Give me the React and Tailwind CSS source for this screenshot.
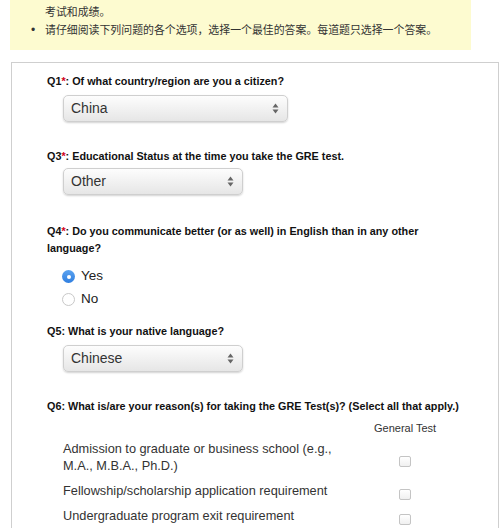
import React from 'react';

const font = { fontFamily: '"Liberation Sans", Arial, "Noto Sans CJK SC", sans-serif' };

function Label({ num, required, children, className = '' }) {
    return (
        <p className={`text-[10.8px] leading-[17px] font-bold text-[#111] ${className}`}>
            {num}
            {required && <span className="text-[#d0021b]">*</span>}
            : {children}
        </p>
    );
}

function Select({ value, width }) {
    return (
        <div
            className={`ml-[16px] h-[27px] ${width} flex items-center justify-between pl-[7px] pr-[8px] rounded-[5px] border border-[#cfcfcf] bg-gradient-to-b from-[#fdfdfd] to-[#e6e6e6] shadow-[0_1px_2px_rgba(0,0,0,0.18)]`}
        >
            <span className="text-[14px] text-[#333]">{value}</span>
            <svg width="7" height="11" viewBox="0 0 7 11">
                <path d="M3.5 0.5 L6.5 4.5 L0.5 4.5 Z" fill="#666" />
                <path d="M3.5 10.5 L6.5 6.5 L0.5 6.5 Z" fill="#666" />
            </svg>
        </div>
    );
}

function Radio({ checked, label }) {
    return (
        <div className="h-[23px] flex items-center ml-[15px]">
            {checked ? (
                <span className="w-[13px] h-[13px] rounded-full bg-gradient-to-b from-[#5aa2f0] to-[#2f7fe0] flex items-center justify-center">
                    <span className="w-[4px] h-[4px] rounded-full bg-white" />
                </span>
            ) : (
                <span className="w-[13px] h-[13px] rounded-full border border-[#c8c8c8] bg-white" />
            )}
            <span className="ml-[6px] text-[13.5px] text-[#222]">{label}</span>
        </div>
    );
}

function CheckRow({ children, className = '' }) {
    return (
        <div className={`flex items-center ${className}`}>
            <p className="w-[285px] ml-[16px] text-[12.75px] leading-[17px] text-[#333]">{children}</p>
            <div className="w-[61px] ml-[26px] flex justify-center mt-[9px]">
                <span className="w-[12px] h-[11px] rounded-[2px] border border-[#c4c4c4] bg-gradient-to-b from-white to-[#f0f0f0]" />
            </div>
        </div>
    );
}

export default function App() {
    return (
        <div className="w-[500px] h-[528px] overflow-hidden bg-white" style={font}>
            <div className="ml-[10px] w-[461px] h-[50px] bg-[#fdfbd0] pt-[3px]">
                <ul className="text-[10.9px] leading-[18px] text-[#333]">
                    <li className="pl-[35px]">考试和成绩。</li>
                    <li className="flex">
                        <span className="w-[35px] pl-[21px] text-[12px]">•</span>
                        <span>请仔细阅读下列问题的各个选项，选择一个最佳的答案。每道题只选择一个答案。</span>
                    </li>
                </ul>
            </div>

            <div className="mt-[12px] ml-[11px] w-[488px] h-[480px] border border-[#cfcfcf] pl-[35px] pt-[10px]">
                <Label num="Q1" required>Of what country/region are you a citizen?</Label>
                <div className="mt-[5px]">
                    <Select value="China" width="w-[225px]" />
                </div>

                <Label num="Q3" required className="mt-[26px]">
                    Educational Status at the time you take the GRE test.
                </Label>
                <div className="mt-[3px]">
                    <Select value="Other" width="w-[180px]" />
                </div>

                <Label num="Q4" required className="mt-[28px] w-[400px]">
                    Do you communicate better (or as well) in English than in any other language?
                </Label>
                <div className="mt-[8px]">
                    <Radio checked label="Yes" />
                    <Radio label="No" />
                </div>

                <Label num="Q5" className="mt-[12px]">What is your native language?</Label>
                <div className="mt-[5px]">
                    <Select value="Chinese" width="w-[180px]" />
                </div>

                <Label num="Q6" className="mt-[26px]">
                    What is/are your reason(s) for taking the GRE Test(s)? (Select all that apply.)
                </Label>
                <div className="mt-[6px] flex">
                    <div className="w-[327px]" />
                    <p className="w-[61px] text-center whitespace-nowrap text-[11px] leading-[14px] text-[#333]">General Test</p>
                </div>
                <CheckRow className="mt-[5px]">
                    Admission to graduate or business school (e.g., M.A., M.B.A., Ph.D.)
                </CheckRow>
                <CheckRow className="mt-[6px]">Fellowship/scholarship application requirement</CheckRow>
                <CheckRow className="mt-[5px]">Undergraduate program exit requirement</CheckRow>
            </div>
        </div>
    );
}
